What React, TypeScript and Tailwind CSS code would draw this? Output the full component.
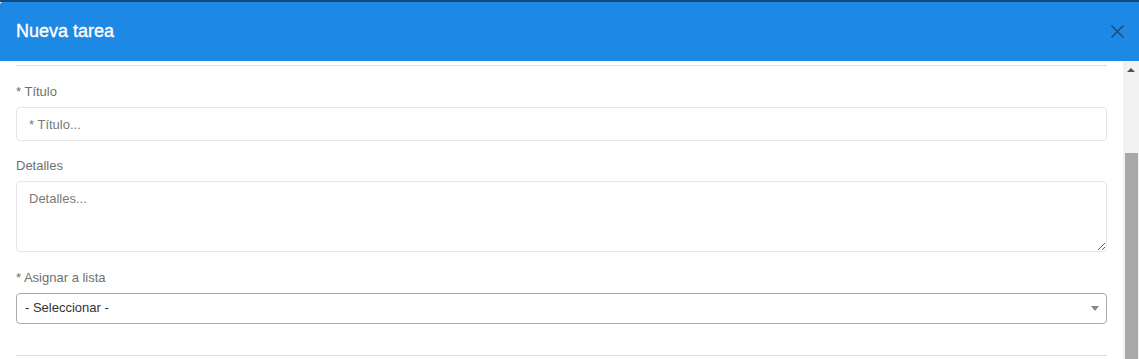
import React from 'react';

const Label: React.FC<{ text: string; className?: string }> = ({ text, className = '' }) => (
  <label className={`block text-[13px] leading-[18px] text-[#707070] ${className}`}>{text}</label>
);

export default function App() {
  return (
    <div className="w-[1139px] h-[359px] overflow-hidden bg-white font-['Liberation_Sans',Arial,sans-serif] flex flex-col">
      {/* top edge */}
      <div className="h-[2px] bg-[#124a80] shrink-0" />

      {/* Header */}
      <div className="h-[59px] shrink-0 bg-[#1e88e5] rounded-tl-[3px] flex items-center justify-between pl-4 pr-[15px]">
        <h4 className="text-[18px] font-normal text-white [-webkit-text-stroke:0.35px_white]">Nueva tarea</h4>
        <button className="w-[13px] h-[13px] text-[#16497a]">
          <svg viewBox="0 0 13 13" className="w-[13px] h-[13px]">
            <path d="M0.5 0.5 L12.5 12.5 M12.5 0.5 L0.5 12.5" stroke="currentColor" strokeWidth="1.4" fill="none" />
          </svg>
        </button>
      </div>

      {/* Body + scrollbar */}
      <div className="flex flex-1 min-h-0">
        <div className="flex-1 px-4 pt-[4px]">
          <hr className="border-0 border-t border-[#dedede]" />

          <Label text="* Título" className="mt-[17px] mb-[6px]" />
          <input
            placeholder="* Título..."
            className="w-full h-[34px] rounded-[4px] border border-[#e6e6e6] px-3 text-[13px] text-[#555] placeholder:text-[#7a7a7a] outline-none"
          />

          <Label text="Detalles" className="mt-[16px] mb-[6px]" />
          <textarea
            placeholder="Detalles..."
            className="block w-full h-[71px] rounded-[4px] border border-[#e6e6e6] px-3 pt-[8px] text-[13px] leading-[18px] text-[#555] placeholder:text-[#7a7a7a] outline-none"
          />

          <Label text="* Asignar a lista" className="mt-[17px] mb-[6px]" />
          <div className="h-[31px] rounded-[4px] border border-[#aaaaaa] flex items-center justify-between pl-2 pr-[7px]">
            <span className="text-[13px] text-[#333] -mt-[1px]">- Seleccionar -</span>
            <span className="w-0 h-0 border-l-[4px] border-r-[4px] border-t-[5px] border-l-transparent border-r-transparent border-t-[#888]" />
          </div>

          <hr className="mt-[31px] border-0 border-t border-[#dedede]" />
        </div>

        {/* scrollbar */}
        <div className="w-[16px] shrink-0 bg-[#f1f1f1] flex flex-col items-center">
          <div className="mt-[7px] w-0 h-0 border-l-[4px] border-r-[4px] border-b-[4px] border-l-transparent border-r-transparent border-b-[#505050]" />
          <div className="mt-[81px] w-[13px] flex-1 bg-[#a8a8a8]" />
        </div>
      </div>
    </div>
  );
}
